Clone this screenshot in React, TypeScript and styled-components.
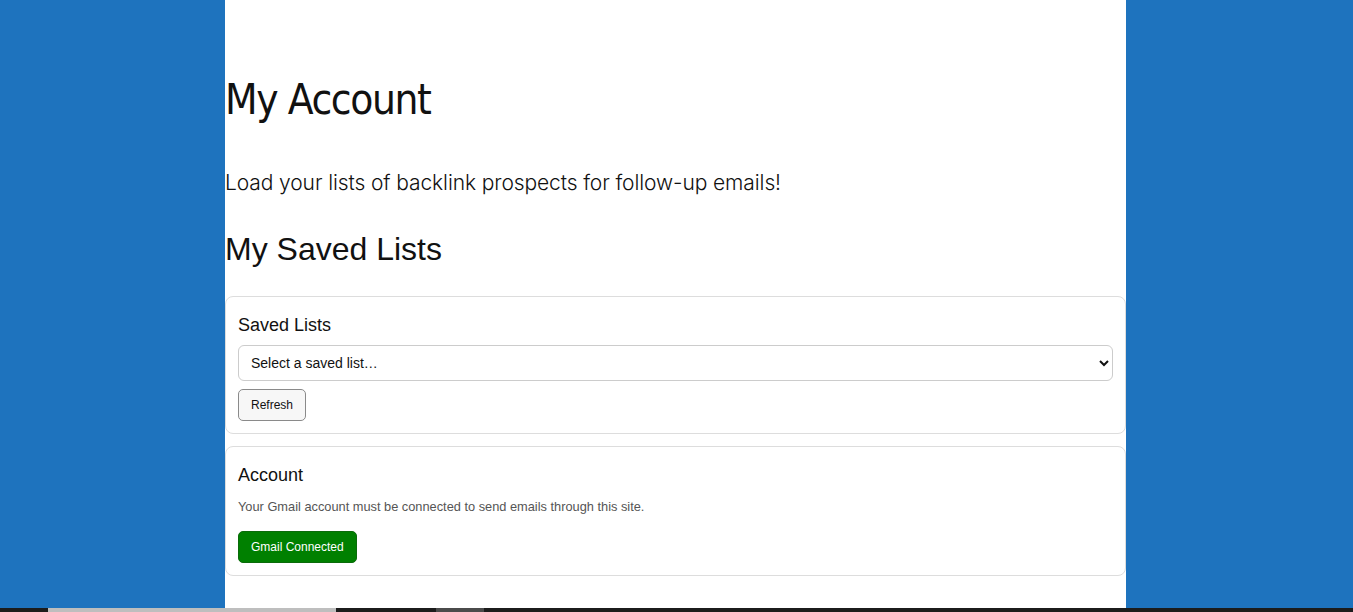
import React from 'react';
import styled, { createGlobalStyle } from 'styled-components';

const GlobalStyle = createGlobalStyle`
  html, body {
    margin: 0;
    padding: 0;
    height: 100%;
  }
  body {
    background: #1e73be;
    font-family: "Liberation Sans", Arial, sans-serif;
    color: #111;
  }
`;

export default function App() {
  return (
    <>
      <GlobalStyle />
      <Page>
        <Main>
          <Title>My Account</Title>
          <Lead>Load your lists of backlink prospects for follow-up emails!</Lead>
          <SectionTitle>My Saved Lists</SectionTitle>

          <Card>
            <CardTitle>Saved Lists</CardTitle>
            <ListSelect defaultValue="">
              <option value="">Select a saved list…</option>
            </ListSelect>
            <Button>Refresh</Button>
          </Card>

          <Card>
            <CardTitle>Account</CardTitle>
            <Note>Your Gmail account must be connected to send emails through this site.</Note>
            <Button $variant="success">Gmail Connected</Button>
          </Card>
        </Main>
        <ProgressStrip>
          <Segment $w={48} $c="#1c1c1c" />
          <Segment $w={288} $c="#bebebe" />
          <Segment $w={100} $c="#1c1c1c" />
          <Segment $w={48} $c="#4b4b4b" />
          <Segment $c="#1c1c1c" $grow />
        </ProgressStrip>
      </Page>
    </>
  );
}

const Page = styled.div`
  min-height: 100vh;
  display: flex;
  flex-direction: column;
`;

const Main = styled.main`
  flex: 1;
  width: 901px;
  margin: 0 0 0 calc(50% - 451.5px);
  background: #fff;
  padding-top: 72px;
  box-sizing: border-box;
`;

const Title = styled.h1`
  margin: 0;
  font-family: "Liberation Sans Narrow", "DejaVu Sans Condensed", "Liberation Sans", sans-serif;
  font-stretch: condensed;
  font-weight: 400;
  font-size: 42px;
  letter-spacing: -1.4px;
  line-height: 56px;
  color: #111;
`;

const Lead = styled.p`
  margin: 41px 0 0;
  font-family: Inter, "Noto Sans", sans-serif;
  font-weight: 300;
  font-size: 21px;
  letter-spacing: -0.1px;
  line-height: 28px;
  color: #111;
`;

const SectionTitle = styled.h2`
  margin: 34px 0 0;
  font-family: "Liberation Sans", Arial, sans-serif;
  font-weight: 400;
  font-size: 32px;
  line-height: 37px;
  color: #111;
`;

const Card = styled.section`
  margin-top: 28px;
  padding: 17px 12px 12px;
  border: 1px solid #ddd;
  border-radius: 8px;
  display: flex;
  flex-direction: column;
  align-items: flex-start;

  & + & {
    margin-top: 12px;
  }
`;

const CardTitle = styled.h3`
  margin: 0;
  font-size: 18px;
  font-weight: 400;
  line-height: 22px;
  color: #111;
`;

const ListSelect = styled.select`
  margin-top: 9px;
  width: 100%;
  height: 36px;
  padding: 0 8px;
  border: 1px solid #ccc;
  border-radius: 6px;
  background: #fff;
  font-family: "Liberation Sans", Arial, sans-serif;
  font-size: 14px;
  color: #111;
`;

const Note = styled.p`
  margin: 13px 0 0;
  font-size: 12.8px;
  line-height: 16px;
  color: #555;
`;

const Button = styled.button<{ $variant?: 'success' }>`
  margin-top: ${(p) => (p.$variant === 'success' ? '16px' : '8px')};
  height: 32px;
  padding: 0 12px;
  border-radius: 5px;
  font-family: "Liberation Sans", Arial, sans-serif;
  font-size: 12px;
  border: 1px solid ${(p) => (p.$variant === 'success' ? '#0a6b0a' : '#8a8a8a')};
  background: ${(p) => (p.$variant === 'success' ? '#008000' : '#f7f7f7')};
  color: ${(p) => (p.$variant === 'success' ? '#fff' : '#111')};
  cursor: pointer;
`;

const ProgressStrip = styled.div`
  height: 4px;
  display: flex;
`;

const Segment = styled.div<{ $w?: number; $c: string; $grow?: boolean }>`
  width: ${(p) => (p.$w ? `${p.$w}px` : 'auto')};
  flex: ${(p) => (p.$grow ? '1' : 'none')};
  background: ${(p) => p.$c};
`;
